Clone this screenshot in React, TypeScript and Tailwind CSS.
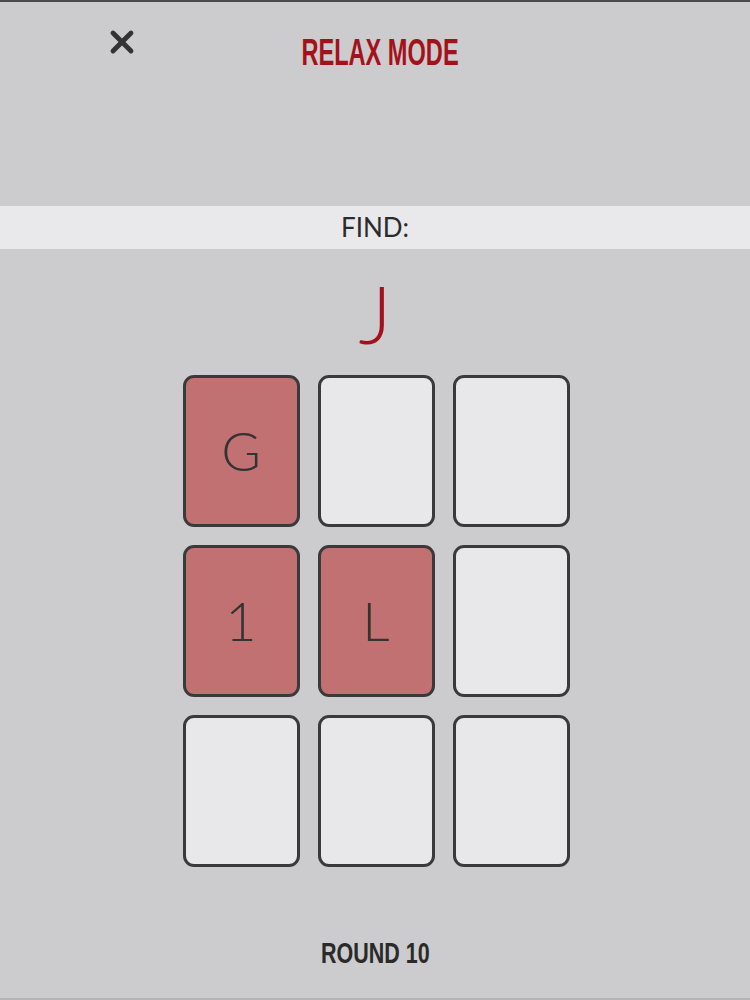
import { X } from 'lucide-react';

const cards: { letter: string; found: boolean }[] = [
  { letter: 'G', found: true },
  { letter: '', found: false },
  { letter: '', found: false },
  { letter: '1', found: true },
  { letter: 'L', found: true },
  { letter: '', found: false },
  { letter: '', found: false },
  { letter: '', found: false },
  { letter: '', found: false },
];

const condensed = { fontFamily: '"Liberation Sans", Arial, sans-serif' };
const geometric = { fontFamily: 'Lato, "Noto Sans", sans-serif' };

export default function App() {
  return (
    <div className="flex h-[1000px] w-[750px] flex-col overflow-hidden border-t-2 border-b-2 border-t-[#4a4a4a] border-b-[#b5b5b5] bg-[#cccbcd]">
      <header className="relative flex h-[204px] justify-center pt-[33px]">
        <button className="absolute left-[104px] top-[22px] text-[#333333]">
          <X size={36} strokeWidth={3.2} />
        </button>
        <h1
          className="ml-[11px] inline-block scale-x-[0.655] text-[36px] font-bold leading-none text-[#a3121a]"
          style={condensed}
        >
          RELAX MODE
        </h1>
      </header>

      <div className="flex h-[43px] items-center justify-center bg-[#e9e8ea]">
        <span className="text-[26px] font-normal text-[#2b2b2b]" style={geometric}>
          FIND:
        </span>
      </div>

      <div className="flex h-[126px] items-start justify-center pt-[24px]">
        <span className="text-[80px] font-light leading-none text-[#a3121a]" style={geometric}>
          J
        </span>
      </div>

      <div className="grid grid-cols-[117px_117px_117px] justify-center gap-[18px] pl-[2px]">
        {cards.map((card, i) => (
          <div
            key={i}
            className={`flex h-[152px] items-center justify-center rounded-[11px] border-[3px] border-[#3a3a3a] ${
              card.found ? 'bg-[#c27173]' : 'bg-[#e8e7e9]'
            }`}
          >
            <span className="text-[54px] font-light leading-none text-[#333333]" style={geometric}>
              {card.letter}
            </span>
          </div>
        ))}
      </div>

      <div className="flex flex-1 items-start justify-center pt-[72px]">
        <span className="inline-block scale-x-[0.74] text-[29px] font-bold leading-none text-[#2a2a2a]" style={condensed}>
          ROUND 10
        </span>
      </div>
    </div>
  );
}
